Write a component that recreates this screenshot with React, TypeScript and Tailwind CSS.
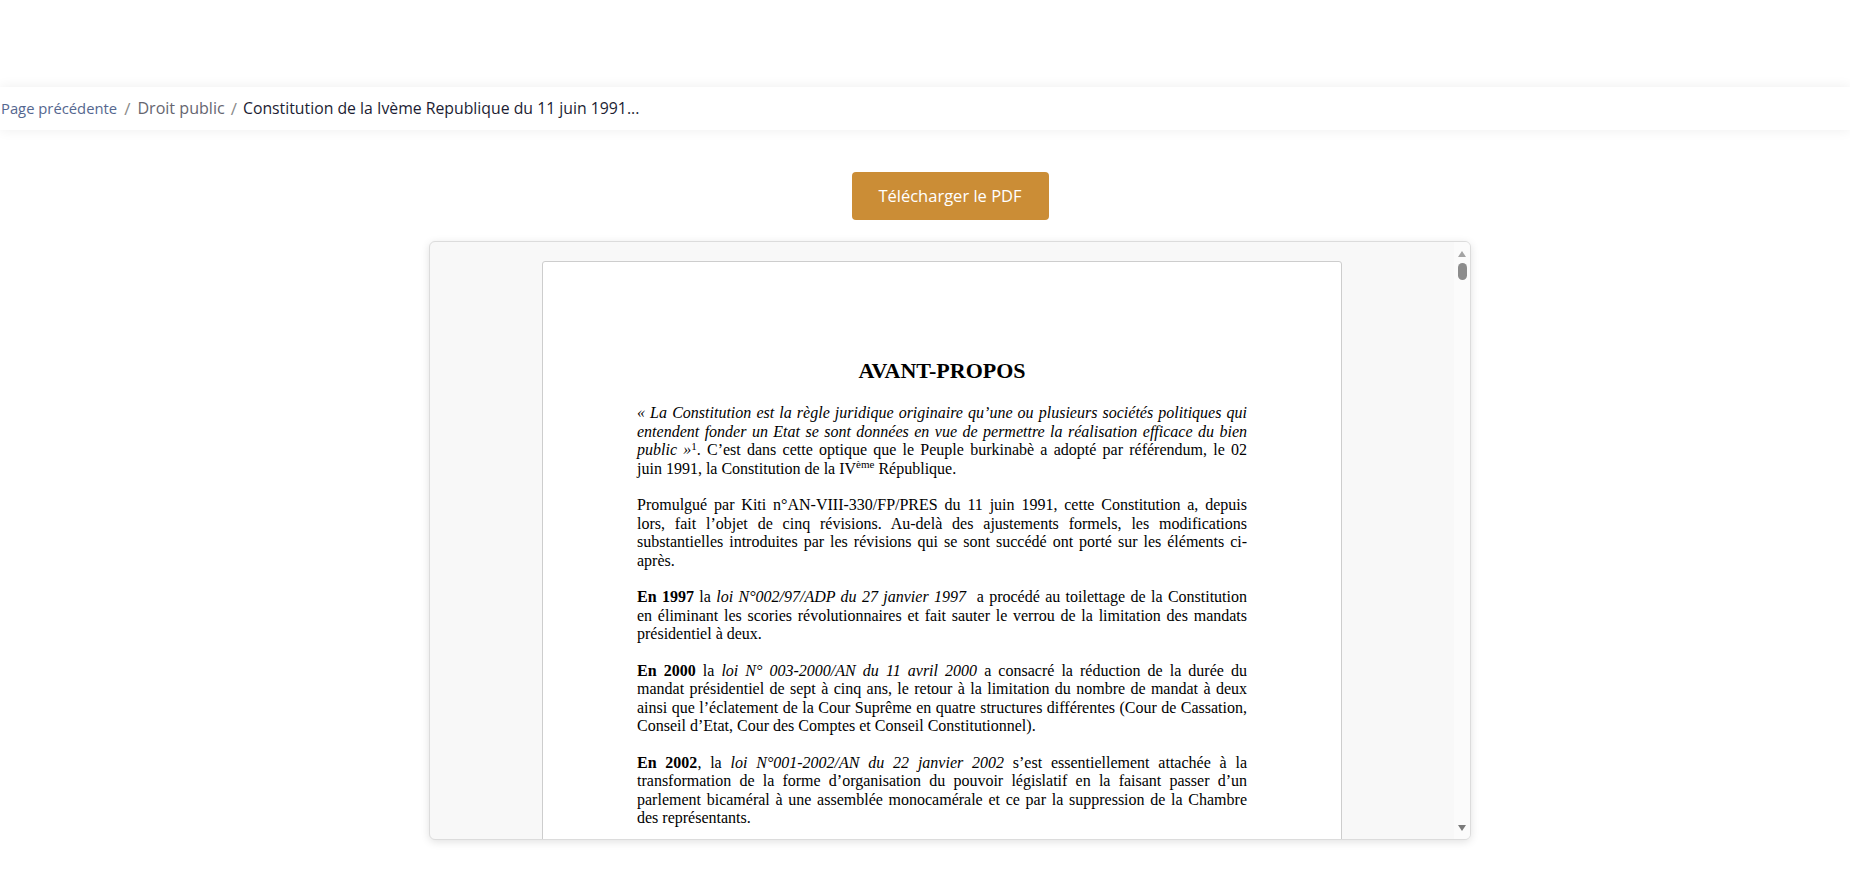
import React from "react";

const Breadcrumb: React.FC = () => {
    return (
        <nav className="h-[43px] bg-white shadow-[0_0_12px_rgba(0,0,0,0.07)] flex items-center font-['Open_Sans',sans-serif]">
            <a href="#" className="pl-[1px] text-[14.8px] text-[#55678f]">
                Page précédente
            </a>
            <span className="mx-[7px] text-[17px] text-[#8a8a8a]">/</span>
            <a href="#" className="text-[16.1px] text-[#666670]">
                Droit public
            </a>
            <span className="mx-[6px] text-[17px] text-[#8a8a8a]">/</span>
            <span className="text-[15.8px] text-[#1c1d33]">
                Constitution de la Ivème Republique du 11 juin 1991...
            </span>
        </nav>
    );
};

const ScrollBar: React.FC = () => {
    return (
        <div className="w-[16px] bg-[#fbfbfb] flex flex-col items-center pt-[9px] pb-[8px]">
            <div className="w-0 h-0 border-l-[4px] border-r-[4px] border-b-[6px] border-l-transparent border-r-transparent border-b-[#a3a3a3]" />
            <div className="mt-[6px] w-[9px] h-[17px] rounded-full bg-[#8c8c8c]" />
            <div className="flex-1" />
            <div className="w-0 h-0 border-l-[4px] border-r-[4px] border-t-[6px] border-l-transparent border-r-transparent border-t-[#7a7a7a]" />
        </div>
    );
};

// one printed line of the PDF, stretched to the column like the original
const L: React.FC<{ children: React.ReactNode; last?: boolean }> = ({ children, last }) => (
    <span className={last ? "block text-left" : "block text-justify [text-align-last:justify]"}>{children}</span>
);

const DocumentPage: React.FC = () => {
    return (
        <div className="w-[800px] shrink-0 bg-white border border-[#cdcdcd] rounded-[3px] px-[94px] pt-[96px] pb-[160px] font-['Liberation_Serif',serif] text-black">
            <h1 className="text-center font-bold text-[22px] leading-[1.15] mb-[21px]">AVANT-PROPOS</h1>
            <div className="text-[16px] leading-[18.4px]">
                <p className="mb-[18.4px]">
                    <L>
                        <i>« La Constitution est la règle juridique originaire qu’une ou plusieurs sociétés politiques qui</i>
                    </L>
                    <L>
                        <i>entendent fonder un Etat se sont données en vue de permettre la réalisation efficace du bien</i>
                    </L>
                    <L>
                        <i>public »</i>
                        <sup className="text-[11px]">1</sup>. C’est dans cette optique que le Peuple burkinabè a adopté
                        par référendum, le 02
                    </L>
                    <L last>
                        juin 1991, la Constitution de la IV<sup className="text-[11px]">ème</sup> République.
                    </L>
                </p>
                <p className="mb-[18.4px]">
                    <L>Promulgué par Kiti n°AN-VIII-330/FP/PRES du 11 juin 1991, cette Constitution a, depuis</L>
                    <L>lors, fait l’objet de cinq révisions. Au-delà des ajustements formels, les modifications</L>
                    <L>substantielles introduites par les révisions qui se sont succédé ont porté sur les éléments ci-</L>
                    <L last>après.</L>
                </p>
                <p className="mb-[18.4px]">
                    <L>
                        <b>En 1997</b> la <i>loi N°002/97/ADP du 27 janvier 1997</i>&nbsp; a procédé au toilettage de
                        la Constitution
                    </L>
                    <L>en éliminant les scories révolutionnaires et fait sauter le verrou de la limitation des mandats</L>
                    <L last>présidentiel à deux.</L>
                </p>
                <p className="mb-[18.4px]">
                    <L>
                        <b>En 2000</b> la <i>loi N° 003-2000/AN du 11 avril 2000</i> a consacré la réduction de la
                        durée du
                    </L>
                    <L>mandat présidentiel de sept à cinq ans, le retour à la limitation du nombre de mandat à deux</L>
                    <L>ainsi que l’éclatement de la Cour Suprême en quatre structures différentes (Cour de Cassation,</L>
                    <L last>Conseil d’Etat, Cour des Comptes et Conseil Constitutionnel).</L>
                </p>
                <p>
                    <L>
                        <b>En 2002</b>, la <i>loi N°001-2002/AN du 22 janvier 2002</i> s’est essentiellement attachée
                        à la
                    </L>
                    <L>transformation de la forme d’organisation du pouvoir législatif en la faisant passer d’un</L>
                    <L>parlement bicaméral à une assemblée monocamérale et ce par la suppression de la Chambre</L>
                    <L last>des représentants.</L>
                </p>
            </div>
        </div>
    );
};

const App: React.FC = () => {
    return (
        <div className="min-h-screen bg-white">
            <header className="h-[87px] bg-white" />
            <Breadcrumb />
            <main className="pl-[50px] flex flex-col items-center">
                <a
                    href="#"
                    className="mt-[42px] w-[197px] h-[48px] rounded-[4px] bg-[#cb8d36] text-white text-[16.5px] flex items-center justify-center font-['Open_Sans',sans-serif]"
                >
                    Télécharger le PDF
                </a>
                <div className="mt-[21px] w-[1042px] h-[599px] rounded-[6px] border border-[#dcdcdc] bg-[#f8f8f8] shadow-[0_2px_8px_rgba(0,0,0,0.12)] overflow-hidden flex">
                    <div className="flex-1 flex justify-center items-start pt-[19px] overflow-hidden">
                        <DocumentPage />
                    </div>
                    <ScrollBar />
                </div>
            </main>
        </div>
    );
};

export default App;
